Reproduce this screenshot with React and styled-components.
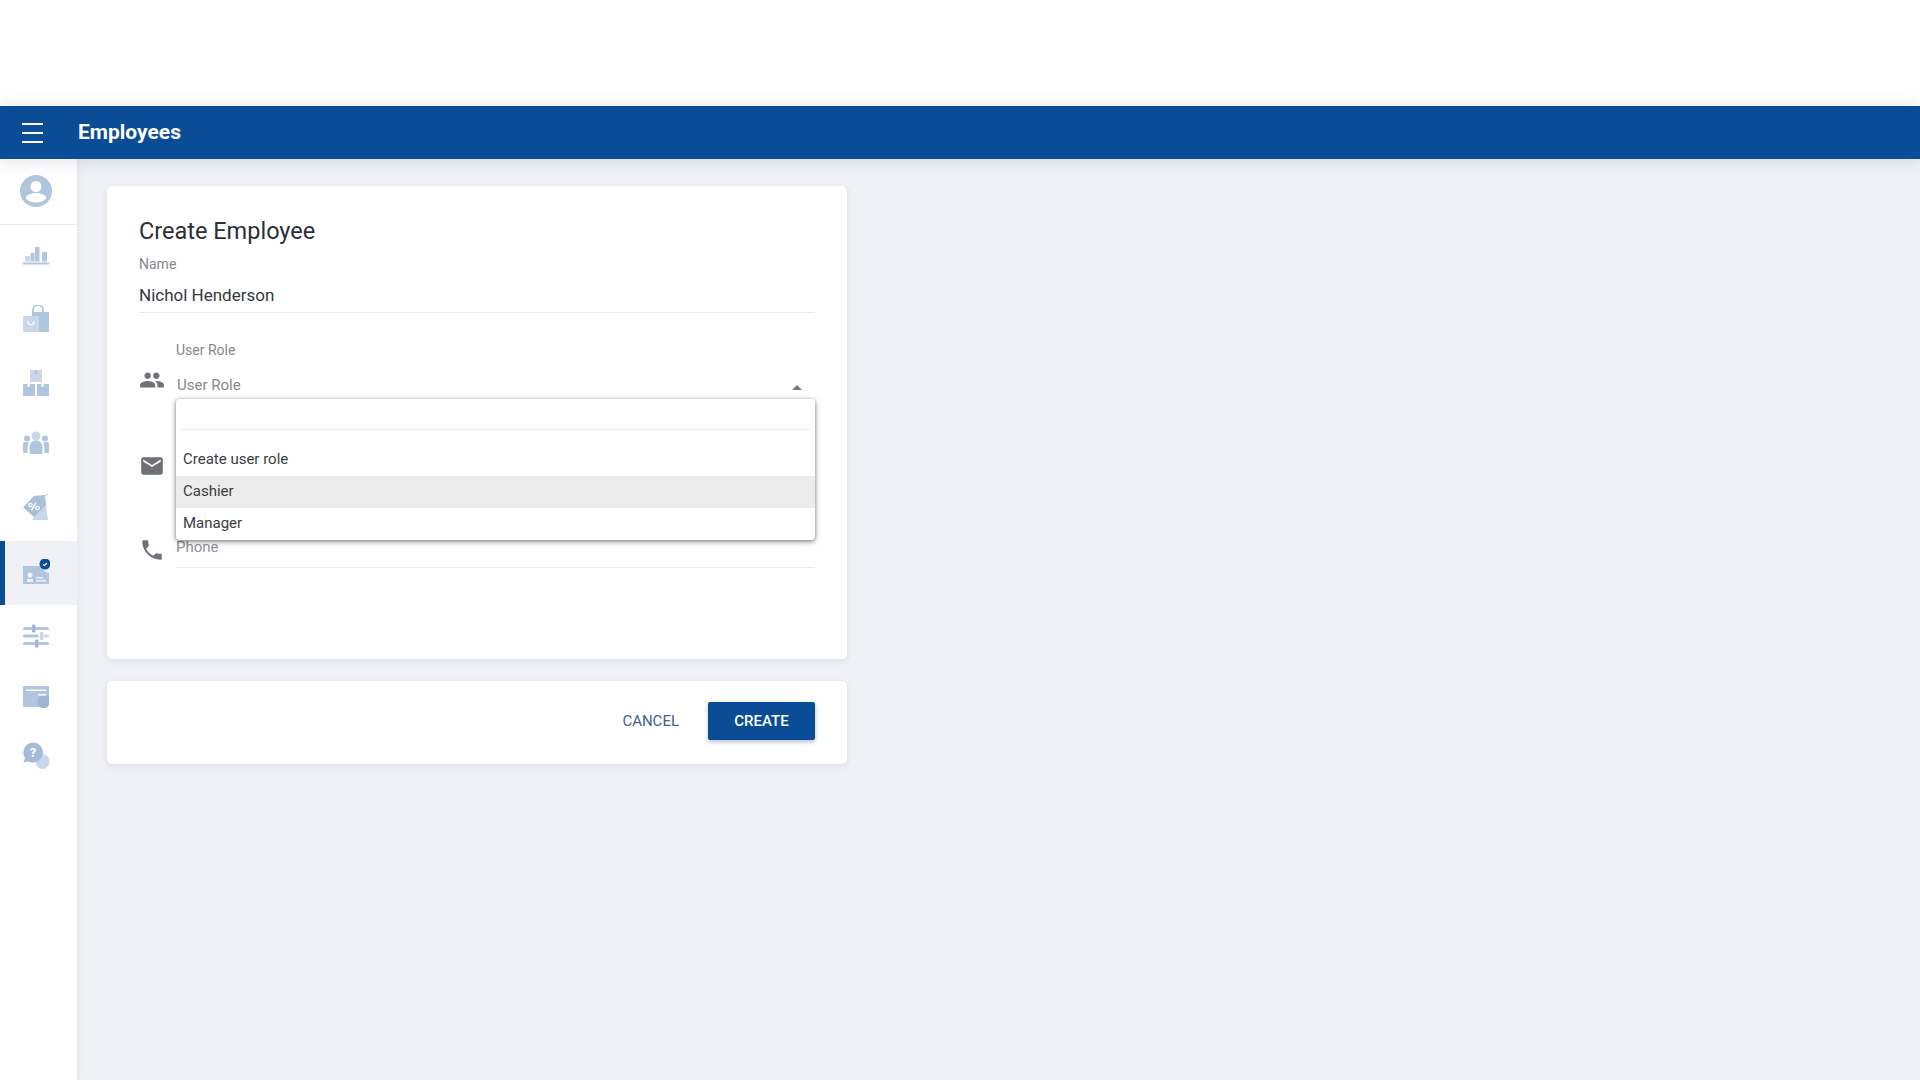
import React from "react";
import styled, { createGlobalStyle } from "styled-components";
import { MdPeople, MdEmail, MdPhone } from "react-icons/md";

const GlobalStyle = createGlobalStyle`
    html, body {
        margin: 0;
        padding: 0;
        background: #fff;
        font-family: Roboto, "Liberation Sans", sans-serif;
    }
`;

const Page = styled.div`
    display: flex;
    flex-direction: column;
    height: 1080px;
    overflow: hidden;
    padding-top: 106px;
    box-sizing: border-box;
`;
const Header = styled.header`
    display: flex;
    align-items: center;
    flex: none;
    height: 53px;
    background: #0a4c96;
    color: #fff;
    box-shadow: 0 2px 16px rgba(20, 30, 60, .12);
    position: relative;
    z-index: 3;
`;
const MenuButton = styled.button`
    display: flex;
    width: 78px;
    padding: 0 0 0 22px;
    border: 0;
    background: none;
    color: #fff;
`;
const HeaderTitle = styled.h1`
    margin: 0 0 2px;
    font-size: 21px;
    font-weight: 700;
`;
const Body = styled.div`
    display: flex;
    flex: 1;
    min-height: 0;
    background: #f0f1f6;
`;
const Sidebar = styled.nav`
    flex: none;
    width: 77px;
    background: #fff;
    box-shadow: 1px 0 6px rgba(30, 40, 80, .05);
    position: relative;
    z-index: 2;
`;
const ProfileBlock = styled.div`
    display: flex;
    align-items: center;
    height: 66px;
    padding-left: 20px;
    padding-bottom: 1px;
    box-sizing: border-box;
    border-bottom: 1px solid #e6e8ee;
`;
const NavItem = styled.div`
    display: flex;
    align-items: center;
    height: ${p => p.$height}px;
    padding-left: 17px;
    border-left: 5px solid ${p => (p.$active ? "#0a4c96" : "transparent")};
    background: ${p => (p.$active ? "#f0f1f6" : "transparent")};
`;
const Content = styled.main`
    display: flex;
    flex-direction: column;
    gap: 22px;
    padding: 27px 0 0 30px;
`;
const Card = styled.section`
    width: 740px;
    box-sizing: border-box;
    background: #fff;
    border-radius: 5px;
    box-shadow: 0 2px 6px rgba(40, 50, 90, .1);
`;
const FormCard = styled(Card)`
    height: 473px;
    padding: 31px 32px 0;
`;
const ActionCard = styled(Card)`
    display: flex;
    align-items: center;
    justify-content: flex-end;
    gap: 29px;
    height: 83px;
    padding: 0 32px 3px;
`;
const CardTitle = styled.h2`
    margin: 0;
    font-size: 23.5px;
    line-height: 28px;
    font-weight: 400;
    color: #2b2f36;
`;
const Label = styled.label`
    display: block;
    font-size: 14px;
    line-height: 16px;
    color: #85898d;
`;
const NameLabel = styled(Label)`
    margin-top: 11px;
`;
const NameValue = styled.div`
    margin-top: 11px;
    padding-bottom: 5px;
    font-size: 17px;
    line-height: 24px;
    color: #35383d;
    border-bottom: 1px solid #e8e9ec;
`;
const Row = styled.div`
    display: flex;
    margin-top: ${p => p.$top}px;
`;
const IconCol = styled.div`
    flex: none;
    width: 37px;
    padding-top: ${p => p.$top}px;
    color: #6f7276;
    svg {
        display: block;
    }
`;
const Field = styled.div`
    flex: 1;
    min-width: 0;
    position: relative;
`;
const SelectValue = styled.div`
    display: flex;
    align-items: center;
    justify-content: space-between;
    height: 24px;
    margin-top: 15px;
    padding: 0 13px 0 1px;
    font-size: 15px;
    color: #85888c;
`;
const Caret = styled.span`
    width: 0;
    height: 0;
    margin-top: 4px;
    border-left: 5px solid transparent;
    border-right: 5px solid transparent;
    border-bottom: 5px solid #777;
`;
const Placeholder = styled.div`
    height: ${p => p.$height}px;
    font-size: 15px;
    line-height: 24px;
    color: #909398;
    border-bottom: 1px solid #e8e9ec;
`;
const Dropdown = styled.div`
    position: absolute;
    top: 57px;
    left: 0;
    right: 0;
    z-index: 1;
    height: 141px;
    box-sizing: border-box;
    padding-top: 45px;
    background: #fff;
    border-radius: 4px;
    box-shadow: 0 1px 4px rgba(0, 0, 0, .5), 0 3px 8px rgba(0, 0, 0, .12);
`;
const SearchLine = styled.div`
    position: absolute;
    top: 30px;
    left: 5px;
    right: 5px;
    border-top: 1px solid #e8e9ec;
`;
const Option = styled.div`
    height: 32px;
    padding-left: 7px;
    font-size: 15px;
    line-height: 31px;
    color: #3a3d42;
    background: ${p => (p.$hover ? "#ececec" : "transparent")};
`;
const CancelButton = styled.button`
    padding: 0;
    border: 0;
    background: none;
    font: 400 15px Roboto, sans-serif;
    color: #3f6090;
`;
const CreateButton = styled.button`
    width: 107px;
    height: 38px;
    border: 0;
    border-radius: 2px;
    background: #0a4c96;
    color: #fff;
    font: 500 15px Roboto, sans-serif;
    box-shadow: 0 2px 4px rgba(10, 40, 90, .3);
`;

const LIGHT = "#b0c5de";
const PALE = "#c9d7e8";

const BurgerIcon = () => (
    <svg width="22" height="22" viewBox="0 0 22 22" stroke="currentColor" strokeWidth="2">
        <path d="M0 2h21M0 11h21M0 20h21" />
    </svg>
);
const ProfileIcon = () => (
    <svg width="32" height="32" viewBox="0 0 32 32">
        <circle cx="16" cy="16" r="16" fill={LIGHT} />
        <circle cx="16" cy="11.5" r="5.5" fill="#fff" />
        <path d="M5.5 23c1.5-3.6 6-5 10.5-5s9 1.4 10.5 5c-2.5 3-6 4.5-10.5 4.5S8 26 5.5 23z" fill="#fff" />
    </svg>
);
const ChartIcon = () => (
    <svg width="28" height="28" viewBox="0 0 28 28" fill={LIGHT}>
        <rect x="1" y="20.5" width="26" height="2" />
        <rect x="3" y="14" width="5" height="5.5" fill={PALE} />
        <rect x="8.5" y="11" width="4" height="8.5" />
        <rect x="13" y="5" width="4.5" height="14.5" />
        <rect x="20" y="10" width="5" height="9.5" />
    </svg>
);
const BagIcon = () => (
    <svg width="28" height="28" viewBox="0 0 28 28">
        <path d="M11 8V5a5 5 0 0 1 10 0v3" fill="none" stroke={LIGHT} strokeWidth="1.8" />
        <path d="M10 7h17v19a1 1 0 0 1-1 1H10z" fill={LIGHT} />
        <path d="M1 12a1 1 0 0 1 1-1h14a1 1 0 0 1 1 1v15H2a1 1 0 0 1-1-1z" fill={PALE} />
        <path d="M6 16c0 5 6 5 6 0" fill="none" stroke="#fff" strokeWidth="1.2" />
    </svg>
);
const BoxesIcon = () => (
    <svg width="28" height="28" viewBox="0 0 28 28" fill={LIGHT}>
        <path d="M8 1h12v12H8z" fill={PALE} />
        <path d="M12.5 1h3v4h-3z" fill={LIGHT} />
        <path d="M1 15h4.5v3h2v-3H13v12H1zM15 15h4.5v3h2v-3H27v12H15z" />
    </svg>
);
const TeamIcon = () => (
    <svg width="28" height="28" viewBox="0 0 28 28" fill={LIGHT}>
        <circle cx="14" cy="7" r="4.5" fill={PALE} />
        <circle cx="5" cy="9.5" r="3" />
        <circle cx="23" cy="9.5" r="3" />
        <path d="M1 15a2 2 0 0 1 2-2h4c-1 2-1.5 4-1.5 11H2a1 1 0 0 1-1-1zM27 15a2 2 0 0 0-2-2h-4c1 2 1.5 4 1.5 11H26a1 1 0 0 0 1-1z" />
        <path d="M7.5 25V18c0-4 3-6.5 6.5-6.5s6.5 2.5 6.5 6.5v7z" />
    </svg>
);
const TagIcon = () => (
    <svg width="28" height="28" viewBox="0 0 28 28">
        <path d="M23 6l3 21H10z" fill={PALE} />
        <path d="M1 14.5L12 3l11-1 1 10-12 12z" fill="#a9bfdb" />
        <path d="M22 4l4-3" stroke={PALE} strokeWidth="1.2" />
        <path d="M9.5 17.5l4.5-8" stroke="#fff" strokeWidth="1.3" />
        <circle cx="8.5" cy="12" r="1.7" fill="none" stroke="#fff" strokeWidth="1.2" />
        <circle cx="15.5" cy="15" r="1.7" fill="none" stroke="#fff" strokeWidth="1.2" />
    </svg>
);
const BadgeIcon = () => (
    <svg width="28" height="28" viewBox="0 0 28 28">
        <path d="M1 7h19a7 7 0 0 0 7 7v10a1 1 0 0 1-1 1H2a1 1 0 0 1-1-1z" fill={LIGHT} />
        <circle cx="8" cy="16" r="2.5" fill="#f0f1f6" />
        <path d="M5 23v-3h6v3zM14 18h7v1.5h-7zM14 21h10v1.5H14z" fill="#f0f1f6" />
        <circle cx="23" cy="5" r="5.5" fill="#0a4c96" />
        <path d="M21 5.5l1.5 1 2.5-2.500" fill="none" stroke="#fff" strokeWidth="1.2" />
    </svg>
);
const SlidersIcon = () => (
    <svg width="28" height="28" viewBox="0 0 28 28" fill={LIGHT}>
        <rect x="1" y="5" width="26" height="3" rx="1.5" />
        <rect x="10" y="2.5" width="3.5" height="8" rx="1" fill="#9fb7d4" />
        <rect x="1" y="12.5" width="16" height="3" rx="1.5" />
        <rect x="18" y="10" width="3.5" height="8" rx="1" fill={PALE} />
        <rect x="22" y="12.5" width="5" height="3" rx="1.5" fill={PALE} />
        <rect x="1" y="20" width="26" height="3" rx="1.5" />
        <rect x="13" y="17.5" width="3.5" height="8" rx="1" fill="#9fb7d4" />
    </svg>
);
const PayIcon = () => (
    <svg width="28" height="28" viewBox="0 0 28 28">
        <path d="M1 3h26v18h-3v3H1z" fill={LIGHT} />
        <path d="M4 6.5h20V8H4z" fill="#fff" />
        <path d="M16 11h8v1.5h-8z" fill="#fff" />
        <path d="M16 16c0-2 2-3 4-3h7v8c0 2-2 4-4 4h-3c-2 0-4-3-4-5z" fill="#9db5d3" />
    </svg>
);
const HelpIcon = () => (
    <svg width="28" height="28" viewBox="0 0 28 28">
        <ellipse cx="20.5" cy="19.5" rx="7" ry="7.5" fill={PALE} />
        <path d="M11 .5a10 10 0 1 1-5 18.700L1.500 20.500 3 16A10 10 0 0 1 11 .5z" fill="#a4bbd7" />
        <text x="11" y="15" textAnchor="middle" fontFamily="Roboto, sans-serif" fontWeight="700" fontSize="13" fill="#fff">?</text>
    </svg>
);

const navItems = [
    { id: "reports", icon: ChartIcon, height: 61 },
    { id: "orders", icon: BagIcon, height: 66 },
    { id: "products", icon: BoxesIcon, height: 62 },
    { id: "customers", icon: TeamIcon, height: 58 },
    { id: "discounts", icon: TagIcon, height: 69 },
    { id: "employees", icon: BadgeIcon, height: 64, active: true },
    { id: "settings", icon: SlidersIcon, height: 62 },
    { id: "billing", icon: PayIcon, height: 60 },
    { id: "help", icon: HelpIcon, height: 58 },
];

const App = () => {
    return (
        <Page>
            <GlobalStyle />
            <Header>
                <MenuButton><BurgerIcon /></MenuButton>
                <HeaderTitle>Employees</HeaderTitle>
            </Header>
            <Body>
                <Sidebar>
                    <ProfileBlock><ProfileIcon /></ProfileBlock>
                    {navItems.map(({ id, icon: Icon, height, active }) => (
                        <NavItem key={id} $height={height} $active={active}><Icon /></NavItem>
                    ))}
                </Sidebar>
                <Content>
                    <FormCard>
                        <CardTitle>Create Employee</CardTitle>
                        <NameLabel>Name</NameLabel>
                        <NameValue>Nichol Henderson</NameValue>
                        <Row $top={29}>
                            <IconCol $top={25}><MdPeople size={26} /></IconCol>
                            <Field>
                                <Label>User Role</Label>
                                <SelectValue>User Role<Caret /></SelectValue>
                                <Dropdown>
                                    <SearchLine />
                                    <Option>Create user role</Option>
                                    <Option $hover>Cashier</Option>
                                    <Option>Manager</Option>
                                </Dropdown>
                            </Field>
                        </Row>
                        <Row $top={55}>
                            <IconCol $top={1}><MdEmail size={26} /></IconCol>
                            <Field><Placeholder $height={30} /></Field>
                        </Row>
                        <Row $top={52}>
                            <IconCol $top={2}><MdPhone size={26} /></IconCol>
                            <Field><Placeholder $height={32}>Phone</Placeholder></Field>
                        </Row>
                    </FormCard>
                    <ActionCard>
                        <CancelButton>CANCEL</CancelButton>
                        <CreateButton>CREATE</CreateButton>
                    </ActionCard>
                </Content>
            </Body>
        </Page>
    );
};

export default App;
